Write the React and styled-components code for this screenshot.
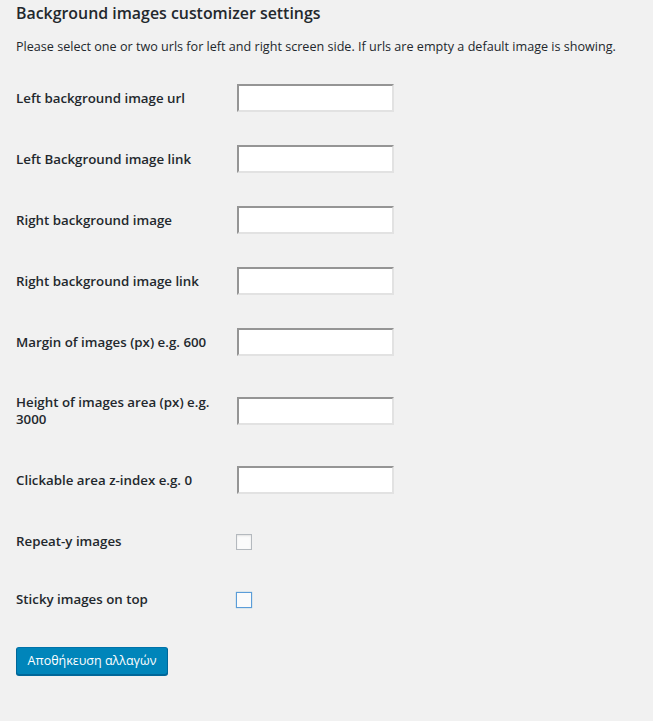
import React from "react";
import styled, { createGlobalStyle } from "styled-components";

const GlobalStyle = createGlobalStyle`
    html, body {
        margin: 0;
        padding: 0;
        background: #f1f1f1;
    }
    body {
        font-family: "Open Sans", "Noto Sans", sans-serif;
        color: #23282d;
        font-size: 13px;
    }
`;

const Page = styled.div`
    padding: 0 16px 40px 16px;
    min-height: 721px;
    box-sizing: border-box;
`;

const Title = styled.h2`
    font-size: 15.9px;
    font-weight: 600;
    margin: 0;
    padding: 2px 0 0 0;
    line-height: 22px;
`;

const Desc = styled.p`
    font-size: 12.6px;
    margin: 13px 0 0 0;
    line-height: 20px;
`;

const Table = styled.div`
    display: flex;
    flex-direction: column;
    margin-top: 11px;
`;

const Row = styled.div`
    display: flex;
    align-items: center;
`;

const labelPadding = {
    normal: "20px 10px 20px 0",
    tall: "21px 10px 22px 0",
    check: "22px 10px 19px 0",
};

const Label = styled.div`
    width: 200px;
    padding: ${({ $kind }) => labelPadding[$kind || "normal"]};
    font-size: 13.3px;
    font-weight: 600;
    line-height: 17px;
`;

const Cell = styled.div`
    padding: ${({ $check }) => ($check ? "0 10px" : "16px 10px 17px 11px")};
    display: flex;
    align-items: center;
`;

const TextInput = styled.input`
    width: 157px;
    height: 28px;
    box-sizing: border-box;
    margin: 0;
    background: #fff;
    border-top: 2px solid #959595;
    border-left: 2px solid #959595;
    border-right: 2px solid #e2e2e2;
    border-bottom: 2px solid #e2e2e2;
    outline: none;
`;

const Check = styled.span`
    display: inline-block;
    width: 16px;
    height: 16px;
    box-sizing: border-box;
    margin: 4px 0 0 0;
    background: #fbfbfb;
    border: 1px solid ${({ $focus }) => ($focus ? "#5b9dd9" : "#b4b9be")};
    box-shadow: ${({ $focus }) => ($focus ? "0 0 1px rgba(30,140,190,.6)" : "inset 0 1px 2px rgba(0,0,0,.1)")};
`;

const Submit = styled.button`
    margin-top: 20px;
    height: 28px;
    width: 152px;
    padding: 0 10px;
    background: #0085ba;
    border: 1px solid;
    border-color: #0073aa #006799 #006799;
    border-radius: 3px;
    box-shadow: 0 1px 0 #006799;
    color: #fff;
    font-family: "Open Sans", "Noto Sans", sans-serif;
    font-size: 12.5px;
    line-height: 26px;
    cursor: pointer;
`;

const fields = [
    { label: "Left background image url" },
    { label: "Left Background image link" },
    { label: "Right background image" },
    { label: "Right background image link" },
    { label: "Margin of images (px) e.g. 600" },
    { label: "Height of images area (px) e.g. 3000", kind: "tall" },
    { label: "Clickable area z-index e.g. 0" },
];

const checks = [
    { label: "Repeat-y images" },
    { label: "Sticky images on top", focus: true },
];

const App = () => {
    return (
        <Page>
            <GlobalStyle />
            <Title>Background images customizer settings</Title>
            <Desc>
                Please select one or two urls for left and right screen side. If urls are empty a default image is showing.
            </Desc>
            <Table>
                {fields.map((f, i) => (
                    <Row key={i}>
                        <Label $kind={f.kind}>{f.label}</Label>
                        <Cell>
                            <TextInput type="text" />
                        </Cell>
                    </Row>
                ))}
                {checks.map((c, i) => (
                    <Row key={"c" + i}>
                        <Label $kind="check">{c.label}</Label>
                        <Cell $check>
                            <Check $focus={c.focus} />
                        </Cell>
                    </Row>
                ))}
            </Table>
            <Submit>Αποθήκευση αλλαγών</Submit>
        </Page>
    );
};

export default App;
